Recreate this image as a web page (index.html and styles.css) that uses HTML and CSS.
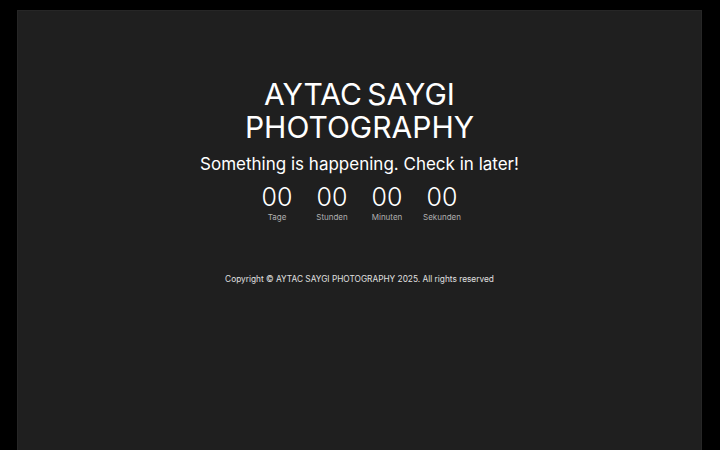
FILE: index.html
```html
<!DOCTYPE html>
<html lang="de">
<head>
<meta charset="utf-8">
<title>AYTAC SAYGI PHOTOGRAPHY</title>
<link rel="stylesheet" href="styles.css">
</head>
<body>
<main class="panel">
  <h1 class="title">AYTAC SAYGI<br>PHOTOGRAPHY</h1>
  <p class="subtitle">Something is happening. Check in later!</p>
  <div class="countdown">
    <div class="unit"><span class="num">00</span><span class="label">Tage</span></div>
    <div class="unit"><span class="num">00</span><span class="label">Stunden</span></div>
    <div class="unit"><span class="num">00</span><span class="label">Minuten</span></div>
    <div class="unit"><span class="num">00</span><span class="label">Sekunden</span></div>
  </div>
  <p class="copyright">Copyright © AYTAC SAYGI PHOTOGRAPHY 2025. All rights reserved</p>
</main>
</body>
</html>
```
FILE: styles.css
```css
html, body {
  margin: 0;
  padding: 0;
  background: #000;
  height: 100%;
  overflow: hidden;
}
body {
  padding: 10px 18px 0 17px;
  box-sizing: border-box;
  font-family: Inter, "Open Sans", sans-serif;
  color: #fff;
}
.panel {
  background: #1f1f1f;
  border: 1px solid #262626;
  height: 460px;
  box-sizing: border-box;
  display: flex;
  flex-direction: column;
  align-items: center;
  padding-top: 67px;
}
.title {
  margin: 0;
  font-weight: 400;
  font-size: 30px;
  line-height: 33px;
  text-align: center;
  letter-spacing: 0;
  word-spacing: -3px;
}
.subtitle {
  margin: 8px 0 0;
  font-size: 17px;
  line-height: 24px;
  font-weight: 400;
}
.countdown {
  display: flex;
  margin-top: 7px;
}
.unit {
  width: 55px;
  display: flex;
  flex-direction: column;
  align-items: center;
}
.num {
  font-size: 25px;
  line-height: 29px;
  font-weight: 300;
}
.label {
  font-size: 8px;
  line-height: 10px;
  color: #b0b0b0;
}
.copyright {
  margin: 51px 0 0;
  font-size: 8.3px;
  line-height: 12px;
  color: #e0e0e0;
}
```
